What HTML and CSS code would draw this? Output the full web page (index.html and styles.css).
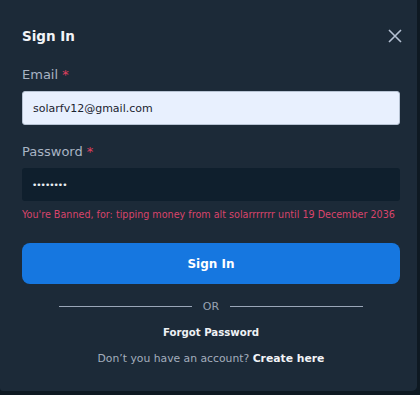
FILE: index.html
```html
<!DOCTYPE html>
<html>
<head>
<meta charset="utf-8">
<link rel="stylesheet" href="styles.css">
</head>
<body>
<div class="modal">
  <div class="header">
    <h2 class="title">Sign In</h2>
    <svg class="close" width="14" height="14" viewBox="0 0 14 14"><path d="M1 1L13 13M13 1L1 13" stroke="#b4c0d2" stroke-width="1.6" fill="none"/></svg>
  </div>
  <label class="label">Email <span class="req">*</span></label>
  <div class="input light">solarfv12@gmail.com</div>
  <label class="label pw">Password <span class="req">*</span></label>
  <div class="input dark">••••••••</div>
  <div class="error">You're Banned, for: tipping money from alt solarrrrrrr until 19 December 2036</div>
  <button class="btn">Sign In</button>
  <div class="or"><span class="line"></span><span class="ortext">OR</span><span class="line"></span></div>
  <div class="forgot">Forgot Password</div>
  <div class="signup">Don’t you have an account? <b>Create here</b></div>
</div>
</body>
</html>
```
FILE: styles.css
```css
html, body { margin: 0; padding: 0; }
body {
  background: #0e1922;
  width: 420px; height: 395px; overflow: hidden;
  font-family: "DejaVu Sans", sans-serif;
}
.modal {
  width: 417px; height: 391px;
  background: #1c2a38;
  border-radius: 0 0 5px 3px;
  box-sizing: border-box;
  padding: 0 15px 0 22px;
  display: flex; flex-direction: column;
}
.header {
  display: flex; align-items: center; justify-content: space-between;
  height: 35px; margin-top: 18px;
}
.title { margin: 0; font-size: 13.5px; font-weight: bold; color: #f2f4f7; }
.close { margin-right: 0px; }
.label { margin-top: 14px; font-size: 13px; color: #a9b4c4; line-height: 16px; }
.label.pw { margin-top: 19px; }
.req { color: #e0405f; }
.input {
  margin-top: 8px; height: 34px; box-sizing: border-box;
  border-radius: 3px; padding: 0 10px; display: flex; align-items: center;
  font-size: 11px; margin-right: 2px;
}
.input.light { background: #e8f0fe; border: 1px solid #b7c3d3; color: #1b2430; }
.input.dark { background: #0f1f2d; color: #e9edf2; font-size: 9px; letter-spacing: -1px; height: 33px; }
.error { margin-top: 8px; font-size: 9.6px; color: #d9446b; white-space: nowrap; }
.btn {
  margin-top: 23px; margin-right: 2px; height: 41px; border: none; border-radius: 8px;
  background: #1677e0; color: #fff; font-family: inherit; font-weight: bold; font-size: 12px;
}
.or { display: flex; align-items: center; justify-content: center; margin-top: 15px; height: 14px; margin-right: 2px; }
.line { width: 133px; height: 1px; background: #9aa6b8; }
.ortext { width: 38px; text-align: center; font-size: 11px; color: #98a3b3; }
.forgot { margin-top: 14px; text-align: center; font-size: 10.2px; font-weight: bold; color: #eef1f5; margin-right: 2px; }
.signup { margin-top: 14px; text-align: center; font-size: 10.8px; color: #a3aebd; margin-right: 2px; }
.signup b { color: #f2f4f7; }
```
